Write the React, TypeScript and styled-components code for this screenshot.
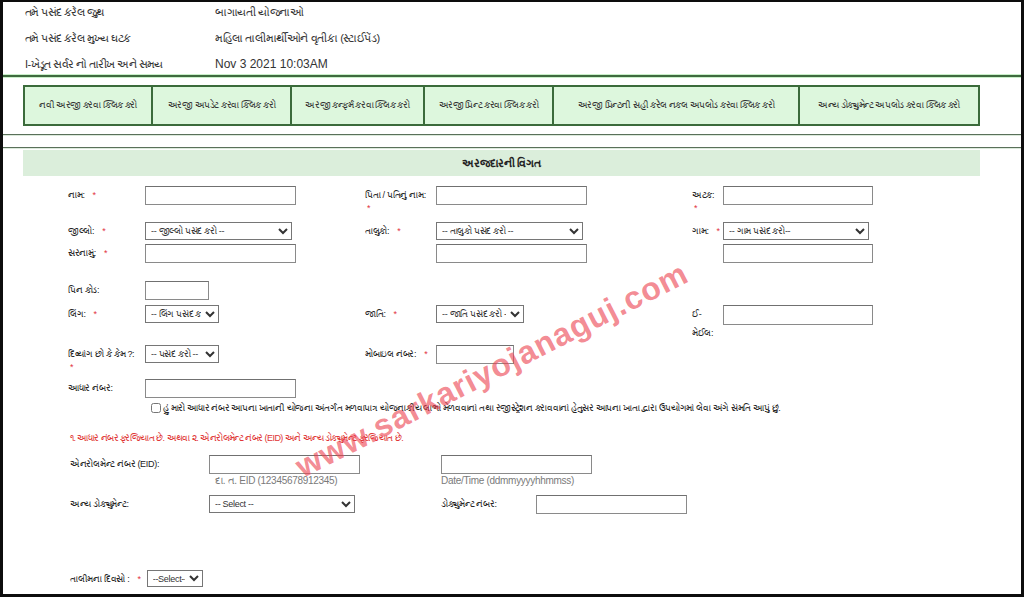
import React from "react";
import styled, { createGlobalStyle } from "styled-components";

const GlobalStyle = createGlobalStyle`
  html, body {
    margin: 0;
    padding: 0;
    background: #0d0d0d;
  }
  body {
    font-family: "Liberation Sans", "Noto Sans", Arial, sans-serif;
  }
  * {
    box-sizing: border-box;
  }
`;

// white sheet inside the dark frame
const Page = styled.div`
  position: relative;
  margin: 2px 3px 0 3px;
  height: 592px;
  background: #fff;
  overflow: hidden;
  color: #222;
`;

// summary of selected scheme
const InfoTable = styled.div`
  display: grid;
  grid-template-columns: 190px 1fr;
  row-gap: 6px;
  padding-left: 22px;
  font-size: 11px;
  letter-spacing: -0.6px;
  line-height: 20px;
  color: #333;
`;

const InfoValue = styled.div<{ $latin?: boolean }>`
  font-size: ${(p) => (p.$latin ? 12 : 11)}px;
  letter-spacing: ${(p) => (p.$latin ? 0 : -0.4)}px;
`;

const GreenRule = styled.div`
  height: 2px;
  margin-top: 1px;
  background: #3f6a3f;
  box-shadow: 0 -1px 0 #c9efc9, 0 1px 0 #c9efc9;
`;

const ButtonBar = styled.div`
  display: grid;
  grid-template-columns: 128px 139px 133px 129px 246px 180px;
  width: max-content;
  margin: 8px 0 0 20px;
  border: 1px solid #3b6b3b;
`;

const BarButton = styled.div`
  height: 39px;
  display: flex;
  align-items: center;
  justify-content: center;
  border: 1px solid #3b6b3b;
  background: #ddf7dd;
  font-size: 8.5px;
  letter-spacing: -0.4px;
  color: #333;
  cursor: pointer;
`;

const Rule = styled.div<{ $mt: number }>`
  height: 1px;
  margin-top: ${(p) => p.$mt}px;
  background: #5a705a;
  box-shadow: 0 1px 0 #dbe9db;
`;

const SectionHeader = styled.div`
  width: 957px;
  height: 26px;
  margin: 2px 0 0 20px;
  display: flex;
  align-items: center;
  justify-content: center;
  background: #dbeedb;
  font-size: 11px;
  letter-spacing: -0.3px;
  font-weight: bold;
  color: #222;
`;

const FormRow = styled.div<{ $h: number; $mt?: number }>`
  display: grid;
  grid-template-columns: 77px 220px 71px 256px 31px 1fr;
  align-items: start;
  height: ${(p) => p.$h}px;
  margin-top: ${(p) => p.$mt ?? 0}px;
  padding-left: 65px;
`;

const Label = styled.div`
  padding-top: 2px;
  font-size: 9px;
  letter-spacing: -0.3px;
  line-height: 15px;
  color: #222;
  white-space: nowrap;
`;

const WrapLabel = styled(Label)`
  white-space: normal;
  line-height: 19px;
  padding-top: 0;
`;

const Star = styled.span<{ $block?: boolean }>`
  display: ${(p) => (p.$block ? "block" : "inline")};
  margin-left: ${(p) => (p.$block ? 2 : 8)}px;
  line-height: ${(p) => (p.$block ? 10 : 15)}px;
  color: #e2333f;
  font-size: 9px;
`;

const TextInput = styled.input<{ $w: number; $h?: number }>`
  width: ${(p) => p.$w}px;
  height: ${(p) => p.$h ?? 19}px;
  border: 1px solid #8a8a8a;
  border-top-color: #707070;
  background: #fff;
  padding: 0 3px;
  font-size: 10px;
  margin: 0;
`;

const Select = styled.select<{ $w: number; $h?: number }>`
  width: ${(p) => p.$w}px;
  height: ${(p) => p.$h ?? 18}px;
  border: 1px solid #767676;
  border-radius: 0;
  background: #fff;
  color: #333;
  font-family: "Liberation Sans", "Noto Sans", Arial, sans-serif;
  font-size: 9px;
  letter-spacing: -0.3px;
  padding: 0 1px;
  margin: 0;
`;

const ConsentRow = styled.label`
  display: flex;
  align-items: center;
  height: 14px;
  padding-left: 148px;
  font-size: 9px;
  letter-spacing: -0.35px;
  color: #222;
`;

const Checkbox = styled.input`
  width: 10px;
  height: 10px;
  margin: 0 2px 0 0;
`;

const Notice = styled.div`
  margin: 16px 0 0 67px;
  font-size: 9px;
  letter-spacing: -0.55px;
  line-height: 14px;
  color: #e03535;
`;

const DocRow = styled.div<{ $h: number; $mt?: number }>`
  display: grid;
  grid-template-columns: 139px 232px 95px 1fr;
  align-items: start;
  height: ${(p) => p.$h}px;
  margin-top: ${(p) => p.$mt ?? 0}px;
  padding-left: 67px;
`;

const Field = styled.div<{ $span?: number }>`
  grid-column: span ${(p) => p.$span ?? 1};
  display: flex;
  flex-direction: column;
`;

const Hint = styled.div<{ $indent?: number }>`
  padding-left: ${(p) => p.$indent ?? 0}px;
  font-size: 10px;
  letter-spacing: -0.3px;
  line-height: 14px;
  color: #7a7a7a;
`;

const InlineRow = styled.div`
  display: flex;
  align-items: center;
  gap: 6px;
  padding-left: 67px;
`;

const Watermark = styled.div`
  position: absolute;
  left: 489px;
  top: 368px;
  transform: translate(-50%, -50%) rotate(-27deg);
  white-space: nowrap;
  pointer-events: none;
  font-family: "Liberation Sans", Arial, sans-serif;
  font-weight: bold;
  font-size: 32px;
  letter-spacing: 1px;
  color: rgba(236, 64, 78, 0.62);
`;

const info: [string, string, boolean][] = [
  ["તમે પસંદ કરેલ જુથ", "બાગાયતી યોજનાઓ", false],
  ["તમે પસંદ કરેલ મુખ્ય ઘટક", "મહિલા તાલીમાર્થીઓને વૃતીકા (સ્ટાઈપેંડ)", false],
  ["I-ખેડૂત સર્વર નો તારીખ અને સમય", "Nov 3 2021 10:03AM", true],
];

const actions = [
  "નવી અરજી કરવા ક્લિક કરો",
  "અરજી અપડેટ કરવા ક્લિક કરો",
  "અરજી કન્ફર્મ કરવા ક્લિક કરો",
  "અરજી પ્રિન્ટ કરવા ક્લિક કરો",
  "અરજી પ્રિન્ટની સહી કરેલ નકલ અપલોડ કરવા ક્લિક કરો",
  "અન્ય ડોક્યુમેન્ટ અપલોડ કરવા ક્લિક કરો",
];

const App = () => {
  return (
    <>
      <GlobalStyle />
      <Page>
        <InfoTable>
          {info.map(([k, v, latin]) => (
            <React.Fragment key={k}>
              <div>{k}</div>
              <InfoValue $latin={latin}>{v}</InfoValue>
            </React.Fragment>
          ))}
        </InfoTable>
        <GreenRule />

        <ButtonBar>
          {actions.map((a) => (
            <BarButton key={a}>{a}</BarButton>
          ))}
        </ButtonBar>

        <Rule $mt={8} />
        <Rule $mt={12} />
        <SectionHeader>અરજદારની વિગત</SectionHeader>

        <FormRow $h={36} $mt={10}>
          <Label>
            નામ:<Star>*</Star>
          </Label>
          <TextInput $w={151} />
          <Label>
            પિતા / પતિનું નામ:<Star $block>*</Star>
          </Label>
          <TextInput $w={151} />
          <Label>
            અટક:<Star $block>*</Star>
          </Label>
          <TextInput $w={150} />
        </FormRow>

        <FormRow $h={22}>
          <Label>
            જીલ્લો:<Star>*</Star>
          </Label>
          <Select $w={147}>
            <option>-- જીલ્લો પસંદ કરો --</option>
          </Select>
          <Label>
            તાલુકો:<Star>*</Star>
          </Label>
          <Select $w={147}>
            <option>-- તાલુકો પસંદ કરો --</option>
          </Select>
          <Label>
            ગામ:<Star>*</Star>
          </Label>
          <Select $w={146}>
            <option>-- ગામ પસંદ કરો--</option>
          </Select>
        </FormRow>

        <FormRow $h={37}>
          <Label>
            સરનામું:<Star>*</Star>
          </Label>
          <TextInput $w={151} />
          <Label />
          <TextInput $w={151} />
          <Label />
          <TextInput $w={150} />
        </FormRow>

        <FormRow $h={24}>
          <Label>પિન કોડ:</Label>
          <TextInput $w={64} />
        </FormRow>

        <FormRow $h={40}>
          <Label>
            લિંગ:<Star>*</Star>
          </Label>
          <Select $w={74}>
            <option>-- લિંગ પસંદ કરો</option>
          </Select>
          <Label>
            જાતિ:<Star>*</Star>
          </Label>
          <Select $w={88}>
            <option>-- જાતિ પસંદ કરો --</option>
          </Select>
          <WrapLabel>ઈ- મેઈલ:</WrapLabel>
          <TextInput $w={150} $h={20} />
        </FormRow>

        <FormRow $h={34}>
          <Label>
            દિવ્યાંગ છો કે કેમ ?:<Star $block>*</Star>
          </Label>
          <Select $w={74}>
            <option>-- પસંદ કરો --</option>
          </Select>
          <Label>
            મોબાઇલ નંબર:<Star>*</Star>
          </Label>
          <TextInput $w={78} />
        </FormRow>

        <FormRow $h={22}>
          <Label>આધાર નંબર:</Label>
          <TextInput $w={151} />
        </FormRow>

        <ConsentRow>
          <Checkbox type="checkbox" />
          હું મારો આધાર નંબર આપના ખાતાની યોજના અંતર્ગત મળવાપાત્ર યોજનાકીય લાભો મેળવવાનાં તથા
          રજીસ્ટ્રેશન કરાવવાનાં હેતુસર આપના ખાતા દ્વારા ઉપયોગમાં લેવા અંગે સંમતિ આપું છું.
        </ConsentRow>

        <Notice>
          ૧. આધાર નંબર ફરજિયાત છે. અથવા ૨. એનરોલમેન્ટ નંબર (EID) અને અન્ય ડોક્યુમેન્ટ ફરજિયાત છે.
        </Notice>

        <DocRow $h={40} $mt={10}>
          <Label>એનરોલમેન્ટ નંબર (EID):</Label>
          <Field>
            <TextInput $w={151} />
            <Hint $indent={6}>દા. ત. EID (12345678912345)</Hint>
          </Field>
          <Field $span={2}>
            <TextInput $w={151} />
            <Hint>Date/Time (ddmmyyyyhhmmss)</Hint>
          </Field>
        </DocRow>

        <DocRow $h={75}>
          <Label>અન્ય ડોક્યુમેન્ટ:</Label>
          <Select $w={146}>
            <option>-- Select --</option>
          </Select>
          <Label>ડોક્યુમેન્ટ નંબર:</Label>
          <TextInput $w={151} />
        </DocRow>

        <InlineRow>
          <Label>
            તાલીમના દિવસો :<Star>*</Star>
          </Label>
          <Select $w={56} $h={17}>
            <option>--Select--</option>
          </Select>
        </InlineRow>

        <Watermark>www.sarkariyojanaguj.com</Watermark>
      </Page>
    </>
  );
};

export default App;
